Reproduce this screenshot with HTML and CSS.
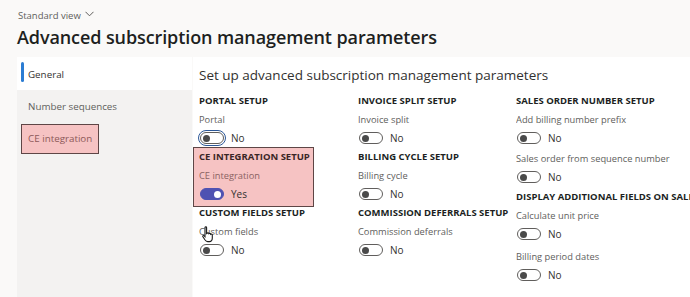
FILE: index.html
```html
<!DOCTYPE html>
<html lang="en">
<head>
    <meta charset="UTF-8">
    <title>Advanced subscription management parameters</title>
    <link rel="stylesheet" href="styles.css">
</head>
<body>

<div class="cabecalho">
    <div class="vista">Standard view
        <svg class="seta" width="9" height="6" viewBox="0 0 9 6"><path d="M0.5 0.8 L4.5 4.8 L8.5 0.8" fill="none" stroke="#605e5c" stroke-width="1"/></svg>
    </div>
    <h1>Advanced subscription management parameters</h1>
</div>

<div class="corpo">
    <div class="menu">
        <div class="item ativo">General</div>
        <div class="item">Number sequences</div>
        <div class="item"><span class="marcado">CE integration</span></div>
    </div>

    <div class="painel">
        <h2>Set up advanced subscription management parameters</h2>
        <div class="colunas">
            <div class="coluna">
                <div class="secao">
                    <div class="titulo">PORTAL SETUP</div>
                    <div class="rotulo">Portal</div>
                    <div class="linha"><span class="chave foco"><i></i></span>No</div>
                </div>
                <div class="secao destaque">
                    <div class="titulo">CE INTEGRATION SETUP</div>
                    <div class="rotulo">CE integration</div>
                    <div class="linha"><span class="chave ligada"><i></i></span>Yes</div>
                </div>
                <div class="secao cursor-aqui">
                    <div class="titulo">CUSTOM FIELDS SETUP</div>
                    <div class="rotulo">Custom fields</div>
                    <div class="linha"><span class="chave"><i></i></span>No</div>
                    <svg class="cursor" width="12" height="17" viewBox="0 0 12 17"><path d="M3 1.5 C3 0.7 4.6 0.7 4.6 1.5 L4.6 7.5 L5.2 7.2 C5.6 6.6 6.8 6.8 6.9 7.6 C7.4 7.1 8.5 7.3 8.6 8.2 C9.1 7.8 10.3 8.1 10.3 9 L10.3 12 C10.3 14 9.2 15.6 7.4 15.6 L5.6 15.6 C4.3 15.6 3.6 14.8 2.9 13.8 L0.9 10.8 C0.4 10 1.4 9.1 2.2 9.8 L3 10.6 Z" fill="#fff" stroke="#1a1a1a" stroke-width="1.1"/></svg>
                </div>
            </div>
            <div class="coluna">
                <div class="secao">
                    <div class="titulo">INVOICE SPLIT SETUP</div>
                    <div class="rotulo">Invoice split</div>
                    <div class="linha"><span class="chave"><i></i></span>No</div>
                </div>
                <div class="secao">
                    <div class="titulo">BILLING CYCLE SETUP</div>
                    <div class="rotulo">Billing cycle</div>
                    <div class="linha"><span class="chave"><i></i></span>No</div>
                </div>
                <div class="secao">
                    <div class="titulo">COMMISSION DEFERRALS SETUP</div>
                    <div class="rotulo">Commission deferrals</div>
                    <div class="linha"><span class="chave"><i></i></span>No</div>
                </div>
            </div>
            <div class="coluna ultima">
                <div class="secao">
                    <div class="titulo">SALES ORDER NUMBER SETUP</div>
                    <div class="rotulo">Add billing number prefix</div>
                    <div class="linha espaco"><span class="chave"><i></i></span>No</div>
                    <div class="rotulo">Sales order from sequence number</div>
                    <div class="linha"><span class="chave"><i></i></span>No</div>
                </div>
                <div class="secao">
                    <div class="titulo">DISPLAY ADDITIONAL FIELDS ON SALES ORDER</div>
                    <div class="rotulo">Calculate unit price</div>
                    <div class="linha espaco mais"><span class="chave"><i></i></span>No</div>
                    <div class="rotulo">Billing period dates</div>
                    <div class="linha"><span class="chave"><i></i></span>No</div>
                </div>
            </div>
        </div>
    </div>
</div>

</body>
</html>
```
FILE: styles.css
```css
body {
    margin: 0;
    background-color: #faf9f8;
    font-family: 'Open Sans', 'Noto Sans', sans-serif;
    color: #323130;
    overflow: hidden;
}
.cabecalho {
    padding: 9px 0 0 17px;
    height: 48px;
}
.vista {
    font-size: 9.5px;
    line-height: 14px;
    color: #605e5c;
    padding-left: 1px;
}
.seta {
    margin-left: 2px;
    vertical-align: 2px;
}
h1 {
    margin: 1px 0 0 0;
    font-size: 18px;
    line-height: 26px;
    font-weight: 600;
    color: #201f1e;
    letter-spacing: -0.1px;
}
.corpo {
    display: flex;
    margin-left: 17px;
    height: 240px;
}
.menu {
    width: 175px;
    background-color: #f3f2f1;
}
.item {
    height: 32px;
    line-height: 34px;
    padding-left: 11px;
    font-size: 9.8px;
    color: #605e5c;
}
.item.ativo {
    height: 33px;
    line-height: 35px;
    background-color: #fff;
    color: #323130;
    position: relative;
}
.item.ativo::before {
    content: "";
    position: absolute;
    left: 4px;
    top: 5px;
    width: 3px;
    height: 20px;
    background-color: #2b7cd3;
    border-radius: 2px;
}
.marcado {
    display: inline-block;
    box-sizing: border-box;
    height: 30px;
    line-height: 28px;
    margin: 2px 0 0 -7px;
    padding: 0 6px;
    background-color: #f6c3c3;
    border: 1px solid #5e4646;
    color: #8c5858;
    vertical-align: top;
}
.painel {
    flex: 1;
    margin-left: 1px;
    background-color: #fff;
    padding: 8px 0 0 6px;
}
h2 {
    margin: 0;
    font-size: 13.5px;
    line-height: 20px;
    font-weight: 400;
    color: #323130;
}
.colunas {
    display: grid;
    grid-template-columns: 159px 158px 1fr;
    margin-top: 9px;
}
.coluna {
    min-width: 0;
}
.coluna.ultima {
    overflow: hidden;
}
.secao {
    position: relative;
    padding-bottom: 5px;
}
.ultima .secao {
    padding-bottom: 6px;
}
.titulo {
    font-size: 9.5px;
    line-height: 14px;
    font-weight: 700;
    color: #201f1e;
    white-space: nowrap;
    margin-bottom: 5px;
}
.rotulo {
    font-size: 9.3px;
    line-height: 14px;
    color: #605e5c;
    margin-bottom: 4px;
}
.linha {
    display: flex;
    align-items: center;
    height: 14px;
    font-size: 10px;
    color: #323130;
}
.linha.espaco {
    margin-bottom: 7px;
}
.linha.espaco.mais {
    margin-bottom: 9px;
}
.chave {
    position: relative;
    box-sizing: border-box;
    width: 24px;
    height: 12px;
    border: 1px solid #605e5c;
    border-radius: 7px;
    margin: 0 7px 0 1px;
    background-color: #fff;
}
.chave i {
    position: absolute;
    left: 2px;
    top: 1.5px;
    width: 7px;
    height: 7px;
    border-radius: 50%;
    background-color: #4a4a4a;
}
.chave.foco {
    outline: 1.5px solid #2b5797;
    outline-offset: 1px;
}
.chave.ligada {
    background-color: #4f52b2;
    border-color: #4f52b2;
}
.chave.ligada i {
    left: auto;
    right: 2px;
    background-color: #fff;
}
.destaque::before {
    content: "";
    position: absolute;
    left: -6px;
    top: -3px;
    width: 121px;
    bottom: -1px;
    background-color: #f6c3c3;
    border: 1px solid #5e4646;
    box-sizing: border-box;
}
.destaque > * {
    position: relative;
}
.destaque .titulo {
    color: #3a2626;
}
.destaque .rotulo {
    color: #8a6262;
}
.cursor {
    position: absolute;
    left: 3px;
    top: 20px;
}
```
